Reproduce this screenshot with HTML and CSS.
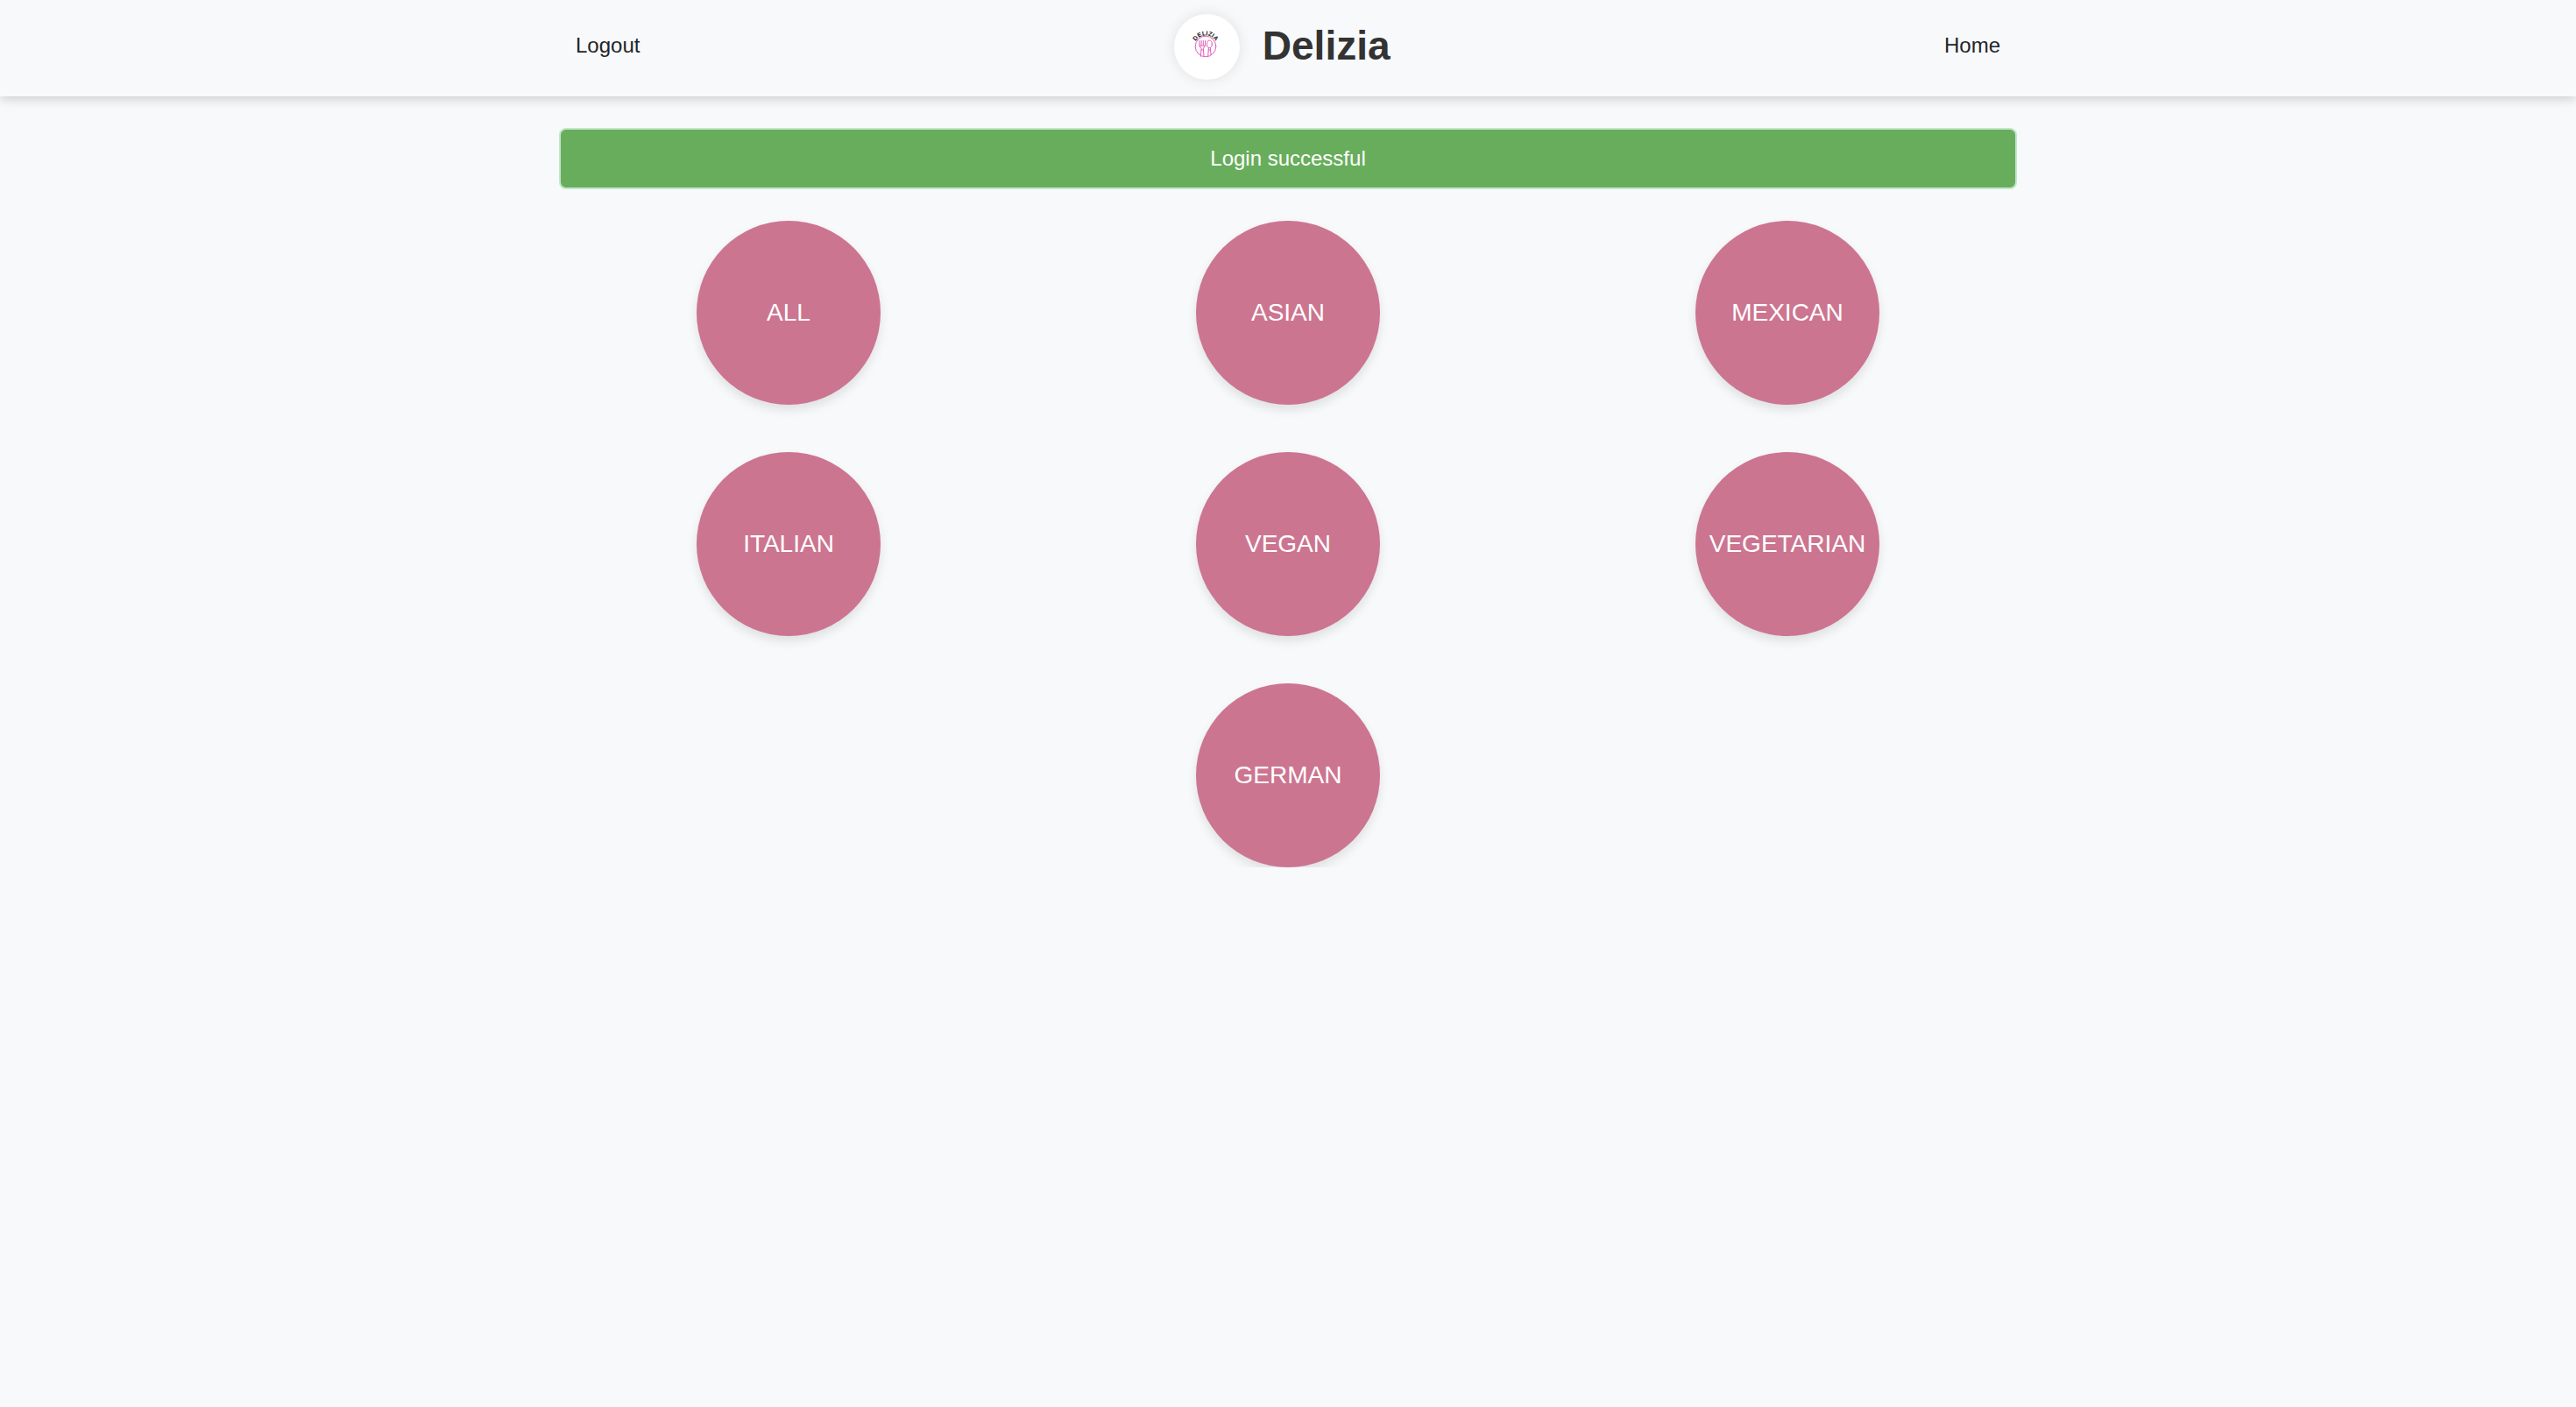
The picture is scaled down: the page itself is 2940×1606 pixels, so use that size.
FILE: index.html
```html
<!DOCTYPE html>
<html lang="en">
<head>
  <meta charset="utf-8">
  <meta name="viewport" content="width=device-width, initial-scale=1">
  <title>Delizia</title>
  <link rel="stylesheet" href="styles.css">
</head>
<body>
  <header class="site-header">
    <nav class="container nav">
      <a class="nav-link" href="#logout">Logout</a>
      <a class="brand" href="#home">
        <svg class="brand-logo" viewBox="0 0 75 75" aria-hidden="true">
          <defs>
            <path id="arc" d="M23.3 37A12.7 12.7 0 0 1 48.7 37"/>
          </defs>
          <text class="logo-text"><textPath href="#arc" startOffset="50%">DELIZIA</textPath></text>
          <g fill="none" stroke="#e05fb8" stroke-width="1" stroke-linecap="round" stroke-linejoin="round">
            <circle cx="36" cy="37" r="11.8"/>
            <path d="M28.9 30.5v5.2q0 2.5 2.2 3l-.7 9.6M35.5 30.5v5.2q0 2.5-2.2 3l.7 9.6M31.1 30.5v5.2M33.3 30.5v5.2M28.9 36.2h6.6M31.4 41h1.6"/>
            <ellipse cx="40.4" cy="34.3" rx="2.9" ry="4.2"/>
            <path d="M39.4 38.4l-.7 9.8M41.2 38.4l.9 8.4M39.3 41h2"/>
          </g>
        </svg>
        <span class="brand-name">Delizia</span>
      </a>
      <a class="nav-link" href="#home">Home</a>
    </nav>
  </header>

  <main class="container">
    <div class="alert" role="status">Login successful</div>
    <div class="categories">
      <div class="category"><a class="category-link" href="#all">ALL</a></div>
      <div class="category"><a class="category-link" href="#asian">ASIAN</a></div>
      <div class="category"><a class="category-link" href="#mexican">MEXICAN</a></div>
      <div class="category"><a class="category-link" href="#italian">ITALIAN</a></div>
      <div class="category"><a class="category-link" href="#vegan">VEGAN</a></div>
      <div class="category"><a class="category-link" href="#vegetarian">VEGETARIAN</a></div>
      <div class="category"><a class="category-link" href="#german">GERMAN</a></div>
    </div>
  </main>
</body>
</html>
```

FILE: styles.css
```css
* {
  box-sizing: border-box;
}

body {
  margin: 0;
  background: #f8f9fb;
  color: #212529;
  font-family: "Liberation Sans", Arial, sans-serif;
  font-size: 24px;
  line-height: 36px;
}

a {
  color: inherit;
  text-decoration: none;
}

.container {
  width: 100%;
  max-width: 1710px;
  margin: 0 auto;
  padding: 0 23px;
}

.site-header {
  padding: 16px 0 19px;
  background: #f8f9fb;
  box-shadow: 0 3px 12px rgba(0, 0, 0, 0.18);
}

.nav {
  display: flex;
  align-items: center;
  justify-content: space-between;
  padding: 0 42px;
}

.nav-link,
.brand-name {
  padding-bottom: 3px;
}

.brand {
  display: flex;
  align-items: center;
  gap: 26px;
  padding-right: 23px;
}

.brand-logo {
  width: 75px;
  height: 75px;
  border-radius: 50%;
  background: #fff;
  box-shadow: 0 0 15px rgba(0, 0, 0, 0.1);
}

.logo-text {
  fill: #111;
  font-size: 7px;
  font-weight: bold;
  text-anchor: middle;
}

.brand-name {
  color: #333;
  font-size: 46px;
  font-weight: bold;
  line-height: 56px;
}

.alert {
  margin: 36px 0;
  padding: 15px;
  border: 2px solid #c3e6cb;
  border-radius: 8px;
  background: #68ad5c;
  color: #fff;
  text-align: center;
}

.categories {
  display: flex;
  flex-wrap: wrap;
  justify-content: center;
  row-gap: 54px;
  margin: 0 -23px;
}

.category {
  display: flex;
  flex: 0 0 calc(100% / 3);
  justify-content: center;
}

.category-link {
  display: flex;
  align-items: center;
  justify-content: center;
  width: 210px;
  height: 210px;
  border-radius: 50%;
  background: #cc7590;
  box-shadow: 0 6px 12px rgba(0, 0, 0, 0.1);
  color: #fff;
  font-size: 28px;
}
```
